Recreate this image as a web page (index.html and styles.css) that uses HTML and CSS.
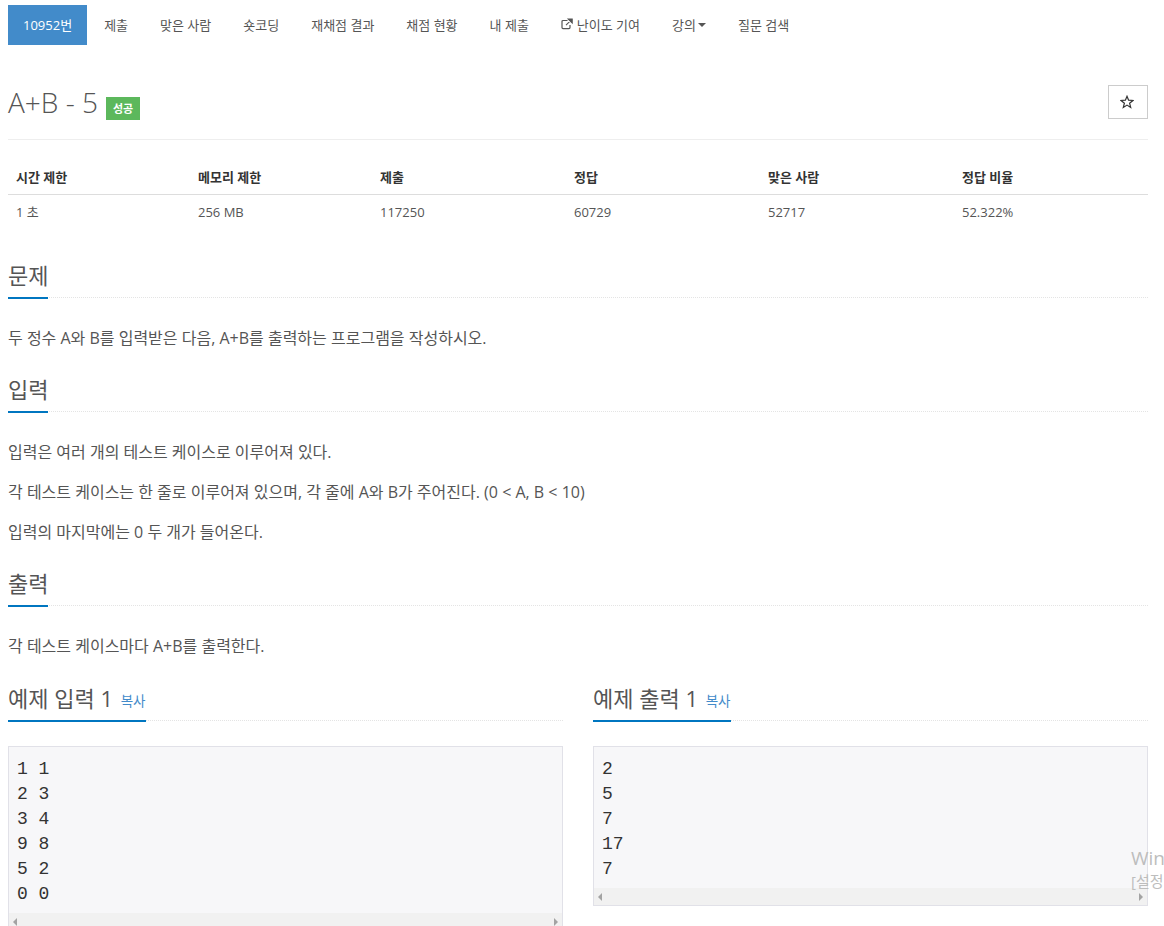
FILE: index.html
```html
<!DOCTYPE html>
<html lang="ko">
<head>
<meta charset="utf-8">
<title>A+B - 5</title>
<link rel="stylesheet" href="styles.css">
</head>
<body>
<div class="page">
  <nav class="nav">
    <a class="nav-item active">10952번</a>
    <a class="nav-item">제출</a>
    <a class="nav-item">맞은 사람</a>
    <a class="nav-item">숏코딩</a>
    <a class="nav-item">재채점 결과</a>
    <a class="nav-item">채점 현황</a>
    <a class="nav-item">내 제출</a>
    <a class="nav-item"><svg class="ext-icon" viewBox="0 0 12 12" width="12" height="12"><path d="M9 7v2.6a1 1 0 0 1-1 1H2a1 1 0 0 1-1-1V3.5a1 1 0 0 1 1-1h4.5" fill="none" stroke="#555" stroke-width="1.2"/><path d="M5 7.2 10.4 1.8M7.2 1h4v4z" fill="#555" stroke="#555" stroke-width="1.1"/></svg>난이도 기여</a>
    <a class="nav-item">강의<span class="caret"></span></a>
    <a class="nav-item">질문 검색</a>
  </nav>

  <header class="title-row">
    <h1 class="title">A+B - 5 <span class="badge">성공</span></h1>
    <button class="star-btn" type="button"><svg viewBox="0 0 14 14" width="14" height="14"><path d="M7 1.3 8.6 5.2 12.9 5.5 9.6 8.2 10.7 12.4 7 10.1 3.3 12.4 4.4 8.2 1.1 5.5 5.4 5.2Z" fill="none" stroke="#333" stroke-width="1.2" stroke-linejoin="miter"/></svg></button>
  </header>

  <div class="info-table">
    <div class="th">시간 제한</div>
    <div class="th">메모리 제한</div>
    <div class="th">제출</div>
    <div class="th">정답</div>
    <div class="th">맞은 사람</div>
    <div class="th">정답 비율</div>
    <div class="td">1 초</div>
    <div class="td">256 MB</div>
    <div class="td">117250</div>
    <div class="td">60729</div>
    <div class="td">52717</div>
    <div class="td">52.322%</div>
  </div>

  <section class="section">
    <div class="headline"><h2>문제</h2></div>
    <p>두 정수 A와 B를 입력받은 다음, A+B를 출력하는 프로그램을 작성하시오.</p>
  </section>

  <section class="section">
    <div class="headline"><h2>입력</h2></div>
    <p>입력은 여러 개의 테스트 케이스로 이루어져 있다.</p>
    <p>각 테스트 케이스는 한 줄로 이루어져 있으며, 각 줄에 A와 B가 주어진다. (0 &lt; A, B &lt; 10)</p>
    <p>입력의 마지막에는 0 두 개가 들어온다.</p>
  </section>

  <section class="section">
    <div class="headline"><h2>출력</h2></div>
    <p>각 테스트 케이스마다 A+B를 출력한다.</p>
  </section>

  <div class="samples">
    <section class="sample">
      <div class="headline"><h2>예제 입력 1 <a class="copy">복사</a></h2></div>
      <div class="code-box">
        <pre>1 1
2 3
3 4
9 8
5 2
0 0</pre>
        <div class="hscroll"><span class="arrow-left"></span><span class="arrow-right"></span></div>
      </div>
    </section>
    <section class="sample">
      <div class="headline"><h2>예제 출력 1 <a class="copy">복사</a></h2></div>
      <div class="code-box">
        <pre>2
5
7
17
7</pre>
        <div class="hscroll"><span class="arrow-left"></span><span class="arrow-right"></span></div>
      </div>
    </section>
  </div>
</div>
<div class="watermark">
  <div class="wm-title">Win</div>
  <div class="wm-sub">[설정</div>
</div>
</body>
</html>
```
FILE: styles.css
```css
* { box-sizing: border-box; }
html, body { margin: 0; height: 926px; overflow: hidden; background: #fff; }
body {
  font-family: "Open Sans", "Noto Sans CJK KR", sans-serif;
  font-size: 14px;
  color: #555;
  position: relative;
}
.page { padding: 5px 16px 0 8px; }

.nav { display: flex; gap: 2px; height: 40px; }
.nav-item {
  display: flex;
  align-items: center;
  gap: 4px;
  padding: 0 15px 2px;
  font-size: 13px;
  color: #555;
  white-space: nowrap;
}
.nav-item.active { background: #428bca; color: #fff; }
.ext-icon { flex: none; }
.caret {
  width: 0; height: 0;
  border-top: 4px solid #555;
  border-left: 4px solid transparent;
  border-right: 4px solid transparent;
  margin: 2px 0 0 -2px;
}

.title-row {
  display: flex;
  justify-content: space-between;
  align-items: flex-start;
  margin-top: 40px;
  height: 55px;
  border-bottom: 1px solid #eee;
}
.title { margin: 0; font-size: 28px; line-height: 34px; height: 36px; font-weight: 300; color: #555; display: flex; align-items: flex-start; gap: 8px; }
.badge {
  display: inline-block;
  background: #5cb85c;
  color: #fff;
  font-size: 11px;
  font-weight: 700;
  line-height: 23px;
  padding: 0 7px;
  margin-top: 12px;
}
.star-btn {
  width: 40px; height: 34px;
  padding: 0 2px 0 0;
  display: flex; align-items: center; justify-content: center;
  background: #fff;
  border: 1px solid #ccc;
}

.info-table {
  display: grid;
  grid-template-columns: 182px 182px 194px 194px 194px 194px;
  margin-top: 20px;
  font-size: 13px;
}
.th {
  padding: 0 8px;
  height: 35px;
  line-height: 34px;
  font-weight: 700;
  color: #333;
  border-bottom: 1px solid #ddd;
}
.td { padding: 0 8px; height: 36px; line-height: 35px; color: #555; }

.section { margin-top: 26px; }
.section:first-of-type { margin-top: 29px; }
.headline { border-bottom: 1px dotted #e4e4e4; height: 38px; margin-bottom: 30px; }
.headline h2 {
  display: inline-block;
  margin: 0;
  height: 39px;
  padding-bottom: 7px;
  font-size: 22px;
  line-height: 30px;
  font-weight: 400;
  color: #555;
  border-bottom: 2px solid #0076c0;
}
.section p { margin: 0 0 20px; font-size: 16px; line-height: 20px; }
.section p:last-child { margin-bottom: 0; }

.samples { display: grid; grid-template-columns: 555px 555px; gap: 30px; margin-top: 27px; }
.copy { font-size: 13.5px; color: #428bca; margin-left: 2px; vertical-align: 1px; }
.sample .headline { margin-bottom: 25px; }
.code-box { border: 1px solid #e1e1e8; background: #f7f7f9; }
pre {
  margin: 0;
  padding: 10px 8px 6px;
  font-family: "Liberation Mono", monospace;
  font-size: 18px;
  line-height: 25px;
  color: #333;
}
.hscroll {
  height: 17px;
  background: #f1f1f1;
  display: flex;
  justify-content: space-between;
  align-items: center;
  padding: 0 4px;
}
.arrow-left { width: 0; height: 0; border-top: 4px solid transparent; border-bottom: 4px solid transparent; border-right: 4px solid #a3a3a3; }
.arrow-right { width: 0; height: 0; border-top: 4px solid transparent; border-bottom: 4px solid transparent; border-left: 4px solid #a3a3a3; }

.watermark {
  position: absolute;
  left: 1131px;
  top: 845px;
  width: 33px;
  color: #bdbdbd;
  white-space: nowrap;
}
.wm-title { font-size: 19px; line-height: 26px; }
.wm-sub { font-size: 15px; line-height: 20px; }
```
